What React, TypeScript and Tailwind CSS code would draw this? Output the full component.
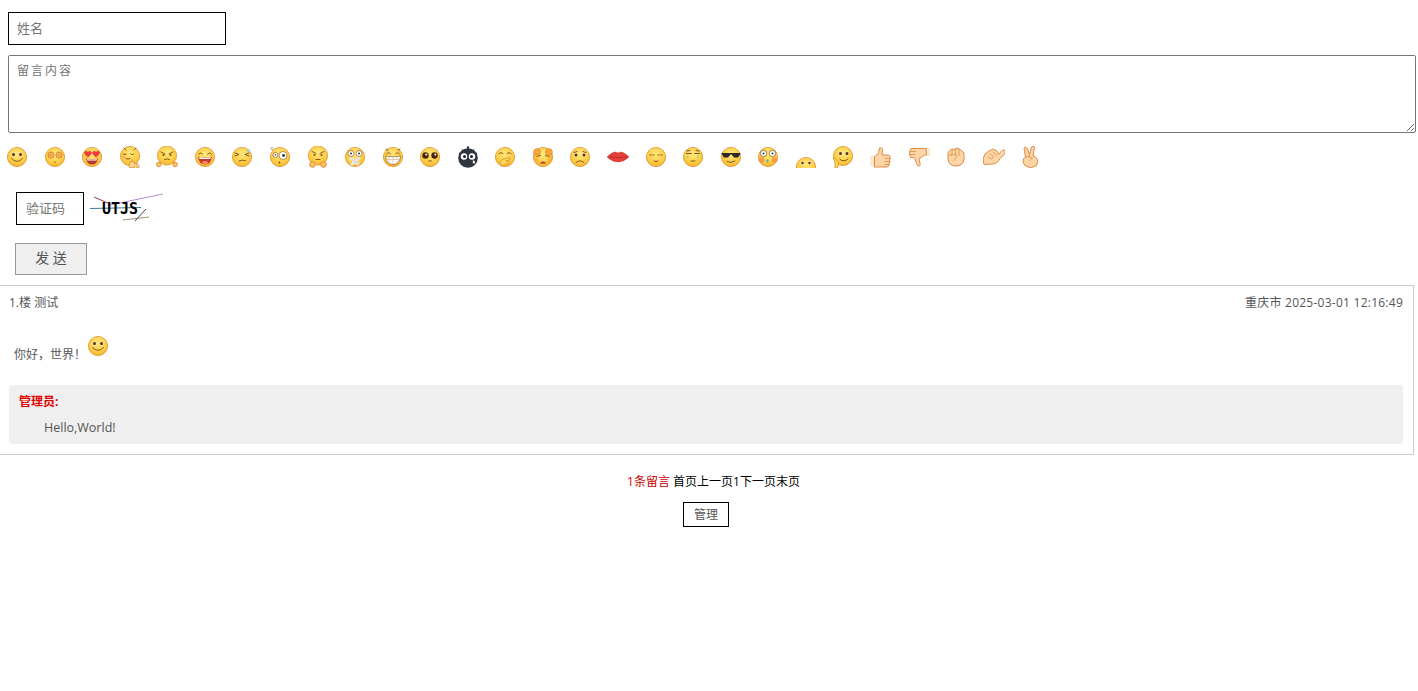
import type { ReactNode } from "react";

const FONT = "font-['Open_Sans','Noto_Sans_CJK_SC',sans-serif]";

function Eye({ x, y, r = 1.5 }: { x: number; y: number; r?: number }) {
  return (
    <g>
      <circle cx={x} cy={y} r={r + 0.7} fill="#f7e3b0" />
      <circle cx={x} cy={y} r={r} fill="#5a3410" />
    </g>
  );
}

function Face({ children, id, cy = 11 }: { children?: ReactNode; id: string; cy?: number }) {
  return (
    <g>
      <defs>
        <radialGradient id={id} cx="50%" cy="35%" r="70%">
          <stop offset="0%" stopColor="#ffe97f" />
          <stop offset="70%" stopColor="#fdc93f" />
          <stop offset="100%" stopColor="#f4a62a" />
        </radialGradient>
      </defs>
      <circle cx="11" cy={cy} r="9.6" fill={`url(#${id})`} stroke="#d9962c" strokeWidth="0.8" />
      {children}
    </g>
  );
}

const BR = "#7a4a14";
const line = { fill: "none", stroke: BR, strokeWidth: 0.9, strokeLinecap: "round" as const };
const skin = { fill: "#fdd6a8", stroke: "#e08a42", strokeWidth: 1, strokeLinejoin: "round" as const };
const crease = { fill: "none", stroke: "#e08a42", strokeWidth: 0.8, strokeLinecap: "round" as const };

const EMOJIS: ReactNode[] = [
  // smile
  <Face id="e0"><Eye x={7.5} y={8.5} /><Eye x={14.5} y={8.5} /><path d="M5.5 12.500q5.500 6 11 0" {...line} /></Face>,
  // dizzy
  <Face id="e1"><circle cx="7" cy="9" r="3" fill="none" stroke="#d4672c" strokeWidth="0.8" /><circle cx="7" cy="9" r="1.300" fill="none" stroke="#d4672c" strokeWidth="0.7" /><circle cx="15" cy="9" r="3" fill="none" stroke="#d4672c" strokeWidth="0.8" /><circle cx="15" cy="9" r="1.300" fill="none" stroke="#d4672c" strokeWidth="0.7" /><circle cx="11" cy="16" r="0.7" fill={BR} /></Face>,
  // heart eyes
  <Face id="e2"><path d="M7 11.500l-3.500-3.500a2 2 0 0 1 3.500-2 2 2 0 0 1 3.500 2z" fill="#ee3c3c" /><path d="M15 11.500l-3.500-3.500a2 2 0 0 1 3.500-2 2 2 0 0 1 3.500 2z" fill="#ee3c3c" /><path d="M5 12.500q6 1.500 12 0q-1 6-6 6t-6-6z" fill="#b5382a" /><path d="M6 13q5 1.200 10 0l-.5 1.500h-9z" fill="#fff" /></Face>,
  // shy, hand at the chin
  <g><Face id="e3" cy={10}><path d="M5 2l2 2M17 2l-2 2" {...line} /><path d="M4 8q2 1.500 3.500 0M11.500 8q2 1.500 3.500 0" {...line} /><path d="M7 12.500q2 1.500 4 0" {...line} /><ellipse cx="4.500" cy="11" rx="1.500" ry="1" fill="#f9a06a" /></Face><path d="M10 21.500l1-6 1.500 1 .5-3 1.500 3 .8-1 .7 6zM17 21.500l.5-4.500q2 .5 3 4q-2 1.500-3.500.5z" fill="#fdd88a" stroke="#dd9a3a" strokeWidth="0.8" strokeLinejoin="round" /></g>,
  // sneer with fists
  <g><Face id="e4" cy={9.500}><path d="M5 6l4 2M17 6l-4 2" {...line} /><circle cx="7.500" cy="9" r="1" fill={BR} /><circle cx="14.500" cy="9" r="1" fill={BR} /><path d="M8.500 13.500q2.500-1.500 5 0" {...line} /></Face><circle cx="2.800" cy="18.500" r="2.200" {...skin} fill="#fbc65c" /><circle cx="19.200" cy="18.500" r="2.200" {...skin} fill="#fbc65c" /></g>,
  // laugh
  <Face id="e5"><path d="M4.500 8q2-2.500 4 0M13.500 8q2-2.500 4 0" {...line} /><path d="M4 10.500q7 2 14 0q-1 8-7 8t-7-8z" fill="#c23c2c" /><path d="M5 11q6 1.500 12 0l-.7 2h-10.600z" fill="#fff" /><ellipse cx="11" cy="16.500" rx="3" ry="1.500" fill="#f58a6a" /></Face>,
  // sweat
  <Face id="e6"><path d="M4 7l4 1.500-4 1.500M18 7l-4 1.500 4 1.500" {...line} /><path d="M8 15q3-1.500 6.500-.5" {...line} /><path d="M17.500 3q-1.500 2-.5 3t2 0q.5-1-1.500-3z" fill="#9fdce8" stroke="#6eb9cf" strokeWidth="0.4" /></Face>,
  // stunned
  <Face id="e7"><circle cx="6.500" cy="9" r="2.500" fill="#fff" stroke={BR} strokeWidth="0.6" /><circle cx="14" cy="9.500" r="4" fill="#fff" stroke={BR} strokeWidth="0.6" /><circle cx="14.500" cy="9.500" r="1.400" fill="#333" /><circle cx="6.500" cy="9" r="0.800" fill="#333" /><circle cx="10.500" cy="16.500" r="0.900" fill={BR} /><circle cx="3" cy="2.500" r="1.200" fill="none" stroke={BR} strokeWidth="0.4" /></Face>,
  // frown with fists
  <g><Face id="e8" cy={9.500}><path d="M5 5.500l4 2M17 5.500l-4 2" {...line} /><circle cx="7.500" cy="9" r="1" fill={BR} /><circle cx="14.500" cy="9" r="1" fill={BR} /><path d="M9 13.500h4" {...line} /></Face><circle cx="5.500" cy="18.500" r="2.800" {...skin} fill="#fbc65c" /><circle cx="16.500" cy="18.500" r="2.800" {...skin} fill="#fbc65c" /></g>,
  // taped mouth
  <Face id="e9"><circle cx="7" cy="7.500" r="3" fill="#fff" stroke={BR} strokeWidth="0.6" /><circle cx="15" cy="7.500" r="3" fill="#fff" stroke={BR} strokeWidth="0.6" /><circle cx="7" cy="7.500" r="1" fill="#333" /><circle cx="15" cy="7.500" r="1" fill="#333" /><path d="M6 12l9 6.500M15.500 11.500l-8.500 7.500" stroke="#e8e8e8" strokeWidth="3" /><path d="M7.500 13l7 5" stroke="#aaa" strokeWidth="0.4" /></Face>,
  // grin
  <Face id="e10"><path d="M4.500 8q2-3 4 0M13.500 8q2-3 4 0" {...line} /><path d="M3.500 10q7.500 1.500 15 0q-.5 8.500-7.500 8.500t-7.500-8.500z" fill="#fff" stroke={BR} strokeWidth="0.6" /><path d="M3.800 13.500h14.400M7 11v7M11 11v7.500M15 11v7" stroke="#c9a070" strokeWidth="0.5" /><path d="M4 3l2 1.500M18 3l-2 1.500" {...line} /></Face>,
  // puppy eyes
  <Face id="e11"><circle cx="6.500" cy="9.500" r="3.200" fill="#4a2508" /><circle cx="15.500" cy="9.500" r="3.200" fill="#4a2508" /><circle cx="7.300" cy="8.500" r="1.100" fill="#fff" /><circle cx="16.300" cy="8.500" r="1.100" fill="#fff" /><path d="M9.500 15q1.500-1 3 0" {...line} /></Face>,
  // black bomb
  <g><path d="M11 1v4M5 3.500l2 3M17 3.500l-2 3M2 7l3 1.500M20 7l-3 1.500" stroke="#2f3540" strokeWidth="1.200" /><circle cx="11" cy="1.500" r="1.200" fill="#2f3540" /><circle cx="11" cy="12" r="9.800" fill="#2f3540" /><circle cx="7" cy="10.500" r="3.200" fill="#fff" /><circle cx="15" cy="10.500" r="3.200" fill="#fff" /><circle cx="7.500" cy="10.500" r="1.500" fill="#222" /><circle cx="14.500" cy="10.500" r="1.500" fill="#222" /><path d="M16.500 14q-1.500 2-.5 3t2 0q.5-1-1.500-3z" fill="#fff" /></g>,
  // yawn, hand over the mouth
  <g><Face id="e13"><path d="M5 7.500q2-2 4 0M13 7.500q2-2 4 0" {...line} /></Face><path d="M7 20q-2-5 2-7l7-1.500q1.500 1-1 2.500l-3 1 3 .5q1 1-1 2-3 1-7 2.500z" fill="#fdd35c" stroke="#d9962c" strokeWidth="0.8" /></g>,
  // crying with fists
  <g><Face id="e14"><path d="M5 10.500l3.500-1M17 10.500l-3.500-1" {...line} /><path d="M7.500 17.500q3.500-4 7 0z" fill="#a83a22" /><path d="M1.500 8l5 5v6l-5-6zM20.500 8l-5 5v6l5-6z" fill="#f5883a" opacity="0.35" /></Face><circle cx="5" cy="6" r="3.300" fill="#f9a83a" stroke="#d9802c" strokeWidth="0.7" /><circle cx="17" cy="6" r="3.300" fill="#f9a83a" stroke="#d9802c" strokeWidth="0.7" /></g>,
  // sad
  <Face id="e15"><Eye x={7} y={9} /><Eye x={15} y={9} /><path d="M5 6.500l3-1M17 6.500l-3-1" {...line} /><path d="M7 16.500q4-3.500 8 0" {...line} /></Face>,
  // lips
  <g><path d="M0 11q5-5 8-5 1.500 0 3 1 1.500-1 3-1 3 0 8 5-5 5-11 5t-11-5z" fill="#e5403c" stroke="#c7302c" strokeWidth="0.4" /><path d="M2 11q9 1.200 18 0" stroke="#a32020" strokeWidth="0.6" fill="none" /></g>,
  // calm
  <Face id="e17"><path d="M4.500 9h5M12.500 9h5" {...line} stroke="#a86a1c" /><path d="M9 15q2 1.500 4 0" {...line} /></Face>,
  // bored tears
  <Face id="e18"><path d="M4.500 7.500h5M12.500 7.500h5M5 5l3-.5M17 5l-3-.5" {...line} /><path d="M5.500 9.500v2.500M16 9.500v2.500" stroke="#8fd4a8" strokeWidth="1.400" /><path d="M9 15h4" {...line} /></Face>,
  // sunglasses
  <Face id="e19"><path d="M1.500 7h19l-.5 1.500-2 3h-4l-2.500-3h-1l-2.500 3h-4l-2-3z" fill="#2a2a2a" /><path d="M7 15.500q4 2.500 8-.5" {...line} /></Face>,
  // scared, blushing
  <Face id="e20"><circle cx="6.500" cy="7.500" r="3.200" fill="#fff" stroke={BR} strokeWidth="0.7" /><circle cx="15.500" cy="7.500" r="3.200" fill="#fff" stroke={BR} strokeWidth="0.7" /><circle cx="6.500" cy="7.500" r="1" fill="#333" /><circle cx="15.500" cy="7.500" r="1" fill="#333" /><ellipse cx="4.500" cy="14" rx="3" ry="2.500" fill="#f7864e" opacity="0.7" /><ellipse cx="17.500" cy="14" rx="3" ry="2.500" fill="#f7864e" opacity="0.7" /><ellipse cx="10.500" cy="15" rx="1.200" ry="1.800" fill="#5bb5a8" /></Face>,
  // peeking, cut off at the bottom
  <g><defs><clipPath id="peek"><rect x="0" y="0" width="22" height="12" /></clipPath></defs><g clipPath="url(#peek)" transform="translate(0 10)"><Face id="e21"><Eye x={7.500} y={7} r={1.200} /><Eye x={14.500} y={7} r={1.200} /></Face></g></g>,
  // thinking, hand at the cheek
  <g><Face id="e22" cy={10}><Eye x={8.500} y={7.500} /><Eye x={15} y={7.500} /><path d="M8 13.500q4 3 8-.5" {...line} /></Face><path d="M3 22v-6l-1.500-3q0-2 1.500-1l1.500 2 1.500 1.500q1 2-.5 6.500z" fill="#fdd35c" stroke="#d9962c" strokeWidth="0.8" /></g>,
  // thumbs up
  <g><path d="M1 10.500h3v9H1z" fill="#fdeeda" stroke="#f3d2ac" strokeWidth="0.6" /><path d="M4.500 10.500q3-1.500 4-4l1-4.500q2.500-1 3 1.500l-.5 5.500h6.500q2 .5 1.500 2.500l-1 7.500q-.5 2-2.500 2H4.500z" {...skin} /><path d="M15 12.500h5.500M15 15.500h5M15 18.500h4" {...crease} /></g>,
  // thumbs down
  <g><path d="M18 2.500h3.500v7H18z" fill="#fdeeda" stroke="#f3d2ac" strokeWidth="0.6" /><path d="M18 2.500H4q-2 0-2 2l-.5 2q-.5 1.500.5 2.500-.5 2 1 2.500h3.500l2 6q1 3 3 2.500 1-.5.5-2.500l-1-5q3-1 4-2.500l3.500-1.500z" {...skin} /><path d="M2.500 5.500h5M2 8.500h5" {...crease} /></g>,
  // fist
  <g><path d="M3 8q0-3 2.500-3.500l1-1.500 3.500.5 1-1.500 3.500 1 2 1.500q2.500 1 2.500 4v5q-1 6.500-8 6.500t-8-6.500z" {...skin} /><path d="M7 3.500v6M10.500 3v6M14 3.500v6M4 9q5-1.500 8 .5l-3 5" {...crease} /></g>,
  // pointing hand
  <g><path d="M0 13q1-6 6-8l4-2 4 2 1.500 3.500 3.500-4q2-1.500 3 0t-1 4l-4 4q-2 5-8 5.500l-8 .5z" {...skin} /><path d="M7 8l3.500 2.500-2 2.500M10 6l3.500 3.500M5 11l3 2" {...crease} /></g>,
  // victory
  <g><path d="M4 2q1.500-1.500 3 0l2.500 6.500L11.500 1q1.500-1.500 3 0L13 10q5 1 4.500 6t-2.500 4q-3 2.500-7 1-4.500-1-5-5.500 0-3 2.500-4.500z" {...skin} /><path d="M5.500 11q4-1.500 7 1l-3 3M9.500 8.500l-.5 2.500" {...crease} /></g>,
];

function Captcha() {
  return (
    <div className="relative ml-[6px] h-[30px] w-[76px]">
      <svg width="76" height="36" viewBox="0 0 76 36" className="block">
        <path d="M4 5l16 7" stroke="#9b3b3b" fill="none" />
        <path d="M0 16.500l51-1" stroke="#3a7aa0" fill="none" />
        <path d="M20 13l53-11" stroke="#b98ad6" fill="none" />
        <path d="M33 28l26-3" stroke="#a89070" fill="none" />
        <path d="M45 29l11-12" stroke="#444" fill="none" />
      </svg>
      <span className="absolute left-[12px] top-[8px] font-['DejaVu_Sans_Mono',monospace] text-[15px] leading-[18px] font-bold text-black">UTJS</span>
    </div>
  );
}

export default function App() {
  return (
    <div className={`${FONT} min-h-[691px] bg-white text-[12px] text-[#555]`}>
      <div className="px-2 pt-3">
        <input
          placeholder="姓名"
          className="block h-[33px] w-[218px] border border-black px-2 pb-[2px] text-[13px] outline-none placeholder:text-[#757575]"
        />
        <textarea
          placeholder="留言内容"
          className="mt-[10px] block h-[78px] w-[1408px] rounded-[2px] border border-[#767676] px-2 py-[5px] text-[12px] leading-[20px] tracking-[2px] outline-none placeholder:text-[#757575]"
        />
      </div>

      {/* emoji strip */}
      <div className="mt-[13px] flex gap-[15.57px] pl-[6px]">
        {EMOJIS.map((emoji, i) => (
          <svg key={i} width="22" height="22" viewBox="0 0 22 22" className="block shrink-0">
            {emoji}
          </svg>
        ))}
      </div>

      <div className="mt-[24px] flex items-start pl-4">
        <input
          placeholder="验证码"
          className="block h-[33px] w-[68px] border border-black px-[9px] pb-[2px] text-[13px] outline-none placeholder:text-[#757575]"
        />
        <Captcha />
      </div>

      <button
        type="button"
        className="mt-[18px] ml-[15px] block h-[32px] w-[72px] border border-[#999] bg-[#efefef] pb-[3px] text-[14px] text-[#555]"
      >
        发 送
      </button>

      {/* message list */}
      <div className="mt-[10px] -ml-px h-[170px] w-[1415px] border border-[#ccc] px-[9px]">
        <div className="flex justify-between pt-[8px] leading-[18px]">
          <span>1.楼 测试</span>
          <span className="mr-[1px] tracking-[0.25px]">重庆市 2025-03-01 12:16:49</span>
        </div>
        <div className="mt-[16px] flex h-[36px] items-end pl-[5px]">
          <span className="leading-[18px]">你好，世界！</span>
          <svg width="22" height="22" viewBox="0 0 22 22" className="mb-[7px] ml-px block">
            {EMOJIS[0]}
          </svg>
        </div>
        <div className="mt-[21px] mr-px h-[59px] rounded-[4px] bg-[#efefef] px-[10px] pt-[8px]">
          <p className="leading-[18px] font-bold text-[#e00000]">管理员:</p>
          <p className="mt-[8px] pl-[25px] text-[12.5px] leading-[18px]">Hello,World!</p>
        </div>
      </div>

      <div className="mt-[18px] w-[1412px] text-center">
        <p className="pl-[15px] leading-[18px] text-black">
          <span className="text-[#c00]">1条留言</span> 首页上一页1下一页末页
        </p>
        <button type="button" className="mt-[11px] h-[25px] w-[46px] border border-black text-[12px] text-[#555]">
          管理
        </button>
      </div>
    </div>
  );
}
